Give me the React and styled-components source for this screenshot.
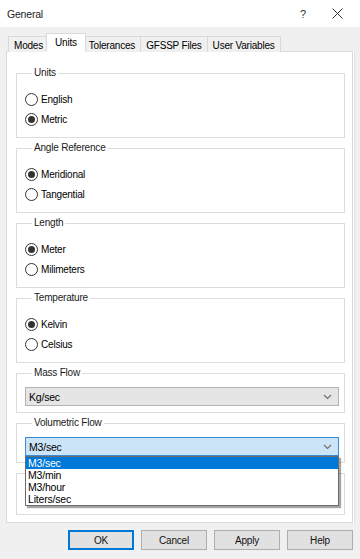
import React from 'react';
import styled, { createGlobalStyle } from 'styled-components';

const GlobalStyle = createGlobalStyle`
  html, body {
    margin: 0;
    padding: 0;
    background: #f0f0f0;
  }
  body {
    font-family: "Liberation Sans", Arial, sans-serif;
    font-size: 10px;
    letter-spacing: -0.2px;
    color: #000;
  }
`;

const Window = styled.div`
  width: 360px;
  height: 559px;
  display: flex;
  flex-direction: column;
  background: #f0f0f0;
  overflow: hidden;
`;

const TitleBar = styled.div`
  height: 27px;
  display: flex;
  align-items: center;
  padding-left: 7px;
  background: #fff;
  color: #222;
  font-size: 10.5px;
`;

const Title = styled.div`
  flex: 1;
`;

const TitleButton = styled.div`
  width: ${({ w }) => w}px;
  height: 27px;
  display: flex;
  align-items: center;
  justify-content: center;
  font-size: 11px;
  color: #333;
`;

const Body = styled.div`
  flex: 1;
  display: flex;
  flex-direction: column;
  padding: 6px 7px 0 6px;
`;

const TabStrip = styled.div`
  display: flex;
  align-items: flex-end;
  height: 19px;
  padding-left: 2px;
  position: relative;
  z-index: 1;
`;

const Tab = styled.div`
  height: ${({ active }) => (active ? 19 : 16)}px;
  padding: 0 ${({ active }) => (active ? 8 : 5)}px;
  margin-right: ${({ active }) => (active ? -2 : 0)}px;
  margin-left: ${({ first, active }) => (first ? 0 : active ? -3 : -1)}px;
  display: flex;
  align-items: center;
  background: ${({ active }) => (active ? '#fff' : '#f0f0f0')};
  border: 1px solid #d9d9d9;
  border-bottom: ${({ active }) => (active ? '1px solid #fff' : 'none')};
  position: relative;
  z-index: ${({ active }) => (active ? 2 : 0)};
  box-sizing: border-box;
  white-space: nowrap;
  padding-top: ${({ active }) => (active ? 0 : 1)}px;
`;

const Page = styled.div`
  height: 472px;
  margin-top: -1px;
  background: #fff;
  border: 1px solid #d9d9d9;
  box-shadow: 1px 0 0 #fff, 2px 0 0 #e3e3e3;
  padding: 15px 7px 0 9px;
  display: flex;
  flex-direction: column;
  gap: 4px;
  box-sizing: border-box;
`;

const Group = styled.fieldset`
  margin: 0;
  padding: ${({ compact }) => (compact ? '8px 5px 6px 8px' : '10px 8px 8px 8px')};
  border: 1px solid #dcdcdc;
  box-shadow: inset 1px 1px 0 #fff;
  min-width: 0;
  position: relative;
  z-index: ${({ raised }) => (raised ? 3 : 'auto')};
`;

const Legend = styled.legend`
  margin-left: 7px;
  padding: 0 2px;
  line-height: 12px;
  color: #1a1a1a;
`;

const RadioRow = styled.label`
  height: 20px;
  display: flex;
  align-items: center;
  gap: 3px;
`;

const RadioCircle = styled.span`
  width: 11px;
  height: 11px;
  border-radius: 50%;
  border: 1px solid #333;
  background: #fff;
  display: flex;
  align-items: center;
  justify-content: center;

  &::after {
    content: '';
    width: 7px;
    height: 7px;
    border-radius: 50%;
    background: ${({ checked }) => (checked ? '#333' : 'transparent')};
  }
`;

const ComboWrap = styled.div`
  position: relative;
`;

const Combo = styled.div`
  height: 19px;
  box-sizing: border-box;
  display: flex;
  align-items: center;
  padding: 0 6px 0 3px;
  background: ${({ focused }) => (focused ? '#cce4f7' : '#e5e5e5')};
  border: 1px solid ${({ focused }) => (focused ? '#3c8ad6' : '#b3b3b3')};
  font-size: 10.5px;
`;

const ComboText = styled.span`
  flex: 1;
`;

const DropList = styled.div`
  position: absolute;
  left: 0;
  right: 0;
  top: 100%;
  background: #fff;
  border: 1px solid #6b6b6b;
  box-shadow: 2px 2px 1px rgba(0, 0, 0, 0.35);
  z-index: 5;
  font-size: 10.5px;
`;

const DropItem = styled.div`
  height: 12px;
  line-height: 12px;
  padding-left: 2px;
  background: ${({ selected }) => (selected ? '#0078d7' : '#fff')};
  color: ${({ selected }) => (selected ? '#fff' : '#000')};
`;

const EmptyGroup = styled.div`
  height: 40px;
  border: 1px solid #dcdcdc;
  margin-top: 6px;
`;

const ButtonRow = styled.div`
  display: flex;
  justify-content: flex-end;
  gap: 7px;
  padding: 7px 0 0 0;
`;

const Button = styled.div`
  width: 66px;
  height: 20px;
  box-sizing: border-box;
  display: flex;
  align-items: center;
  justify-content: center;
  background: #e1e1e1;
  border: ${({ primary }) => (primary ? '2px solid #0078d7' : '1px solid #adadad')};
  color: #111;
`;

const Chevron = () => (
  <svg width="9" height="6" viewBox="0 0 9 6">
    <path d="M1 1l3.5 3.5L8 1" fill="none" stroke="#6d6d6d" strokeWidth="1.1" />
  </svg>
);

const CloseIcon = () => (
  <svg width="11" height="11" viewBox="0 0 11 11">
    <path d="M0.5 0.5l10 10M10.5 0.5l-10 10" stroke="#333" strokeWidth="1" />
  </svg>
);

const Radio = ({ label, checked }) => (
  <RadioRow>
    <RadioCircle checked={checked} />
    {label}
  </RadioRow>
);

const radioGroups = [
  { title: 'Units', options: ['English', 'Metric'], value: 'Metric' },
  { title: 'Angle Reference', options: ['Meridional', 'Tangential'], value: 'Meridional' },
  { title: 'Length', options: ['Meter', 'Milimeters'], value: 'Meter' },
  { title: 'Temperature', options: ['Kelvin', 'Celsius'], value: 'Kelvin' },
];

const tabs = ['Modes', 'Units', 'Tolerances', 'GFSSP Files', 'User Variables'];

export default function App() {
  return (
    <Window>
      <GlobalStyle />
      <TitleBar>
        <Title>General</Title>
        <TitleButton w={22}>?</TitleButton>
        <TitleButton w={46}>
          <CloseIcon />
        </TitleButton>
      </TitleBar>
      <Body>
        <TabStrip>
          {tabs.map((t, i) => (
            <Tab key={t} active={t === 'Units'} first={i === 0}>
              {t}
            </Tab>
          ))}
        </TabStrip>
        <Page>
          {radioGroups.map((g) => (
            <Group key={g.title}>
              <Legend>{g.title}</Legend>
              {g.options.map((o) => (
                <Radio key={o} label={o} checked={o === g.value} />
              ))}
            </Group>
          ))}
          <Group compact>
            <Legend>Mass Flow</Legend>
            <Combo>
              <ComboText>Kg/sec</ComboText>
              <Chevron />
            </Combo>
          </Group>
          <Group compact raised>
            <Legend>Volumetric Flow</Legend>
            <ComboWrap>
              <Combo focused>
                <ComboText>M3/sec</ComboText>
                <Chevron />
              </Combo>
              <DropList>
                <DropItem selected>M3/sec</DropItem>
                <DropItem>M3/min</DropItem>
                <DropItem>M3/hour</DropItem>
                <DropItem>Liters/sec</DropItem>
              </DropList>
            </ComboWrap>
          </Group>
          <EmptyGroup />
        </Page>
        <ButtonRow>
          <Button primary>OK</Button>
          <Button>Cancel</Button>
          <Button>Apply</Button>
          <Button>Help</Button>
        </ButtonRow>
      </Body>
    </Window>
  );
}
